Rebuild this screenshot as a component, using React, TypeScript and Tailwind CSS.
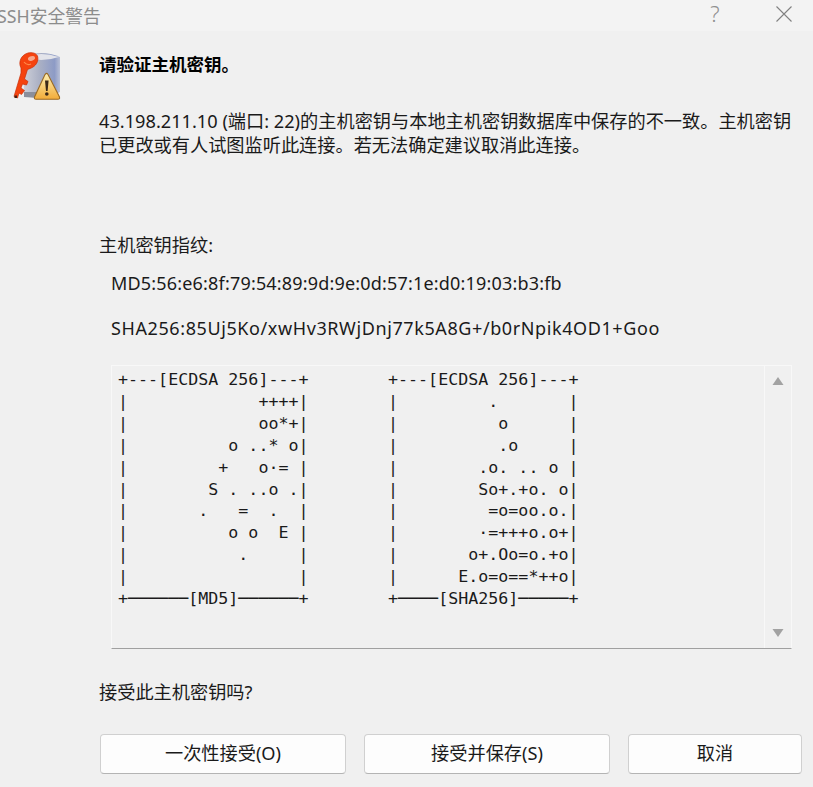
const FONT = '"Noto Sans", "Noto Sans CJK SC", sans-serif';

const left = [
  "+---[ECDSA 256]---+",
  "|             ++++|",
  "|             oo*+|",
  "|          o ..* o|",
  "|         +   o·= |",
  "|        S . ..o .|",
  "|       .   =  .  |",
  "|          o o  E |",
  "|           .     |",
  "|                 |",
  "+──────[MD5]──────+",
];
const right = [
  "+---[ECDSA 256]---+",
  "|         .       |",
  "|          o      |",
  "|          .o     |",
  "|        .o. .. o |",
  "|        So+.+o. o|",
  "|         =o=oo.o.|",
  "|        ·=+++o.o+|",
  "|       o+.Oo=o.+o|",
  "|      E.o=o==*++o|",
  "+────[SHA256]─────+",
];

function KeyIcon() {
  return (
    <svg width="48" height="48" viewBox="13 52 48 48" className="shrink-0">
      <defs>
        <linearGradient id="cyl" x1="0" x2="1" y1="0" y2="0">
          <stop offset="0" stopColor="#cfd1d9" />
          <stop offset="0.45" stopColor="#aab0c4" />
          <stop offset="0.85" stopColor="#8d9bc6" />
          <stop offset="1" stopColor="#b9c0d6" />
        </linearGradient>
        <linearGradient id="tri" x1="0" x2="0" y1="0" y2="1">
          <stop offset="0" stopColor="#fdf0b4" />
          <stop offset="1" stopColor="#f2ab38" />
        </linearGradient>
      </defs>
      <path d="M23 57 Q41 49 60 57 V92 Q50 98 38 98 L24 96 Z" fill="url(#cyl)" />
      <path d="M24 57 Q41 51 59 57 Q41 63 24 57 Z" fill="#e3e4ea" />
      <path d="M24 92 H38 V98 L24 97 Z" fill="#8b8f9c" />
      <path d="M37.5 56 C39 61 36 66.5 30 68.5 L27.5 69.5 L24.5 79 L28 81.5 L26.5 85 L22.5 84 L21 88 L24.5 90.5 L21.5 94.5 L19 93 L17.5 98 L14 96.5 L21 73 L21 68 C18 62 21 55 28 53 C32 52 36 53 37.5 56 Z" fill="#f5430f" stroke="#c92f08" strokeWidth="0.7" />
      <ellipse cx="31.5" cy="58.5" rx="3.6" ry="2.2" fill="#f6a78c" transform="rotate(-15 31.5 58.5)" />
      <path d="M24 62 Q27 66 31 64" fill="none" stroke="#ff8a4a" strokeWidth="1.2" />
      <rect x="14.5" y="95.5" width="2.5" height="2.5" fill="#4a2010" />
      <path d="M46 73.5 Q47 73 48 74.5 L59.5 97 Q60 99.3 58 99.3 L36 99.3 Q34 99.3 34.5 97 L45 74.5 Z" fill="url(#tri)" stroke="#9a6a24" strokeWidth="1.1" />
      <path d="M45 80.5 H48.6 L47.6 91 H46 Z" fill="#3a2818" />
      <circle cx="46.8" cy="94" r="1.8" fill="#3a2818" />
    </svg>
  );
}

function Ascii({ lines, className }: { lines: string[]; className: string }) {
  return (
    <div className={`text-[16.67px] leading-[21.9px] whitespace-pre text-[#1a1a1a] ${className}`} style={{ fontFamily: '"DejaVu Sans Mono", monospace' }}>
      {lines.map((l, i) => (
        <div key={i}>{l}</div>
      ))}
    </div>
  );
}

function Btn({ label, w }: { label: string; w: string }) {
  return (
    <div className={`${w} h-[40px] rounded-[4px] border border-[#d0d0d0] border-b-[#b4b4b4] bg-[#fdfdfd] flex items-center justify-center text-[18.2px] text-[#1a1a1a]`}>
      {label}
    </div>
  );
}

export default function App() {
  return (
    <div className="w-[813px] h-[787px] overflow-hidden bg-[#f0f0f0] text-[18.2px] text-[#1a1a1a]" style={{ fontFamily: FONT }}>
      <div className="h-[31px] bg-[#f3f3f3] flex items-center text-[#8c8c8c]">
        <span className="ml-[-3px] flex-1 text-[17.8px] leading-[28px]">SSH安全警告</span>
        <span className="self-start w-[30px] mr-[46px] text-center text-[#909090] text-[22px] font-light leading-[26px]">?</span>
        <svg width="16" height="16" viewBox="0 0 16 16" className="mr-[21px] mb-[4px]">
          <path d="M0.5 0.5 L15.5 15.5 M15.5 0.5 L0.5 15.5" stroke="#808080" strokeWidth="1.1" />
        </svg>
      </div>

      <div className="flex">
        <div className="w-[99px] shrink-0 pl-[13px] pt-[21px]">
          <KeyIcon />
        </div>
        <div className="flex-1 pr-[11px]">
          <div className="mt-[20px] h-[26px] leading-[26px] font-bold text-black text-[17.5px]">请验证主机密钥。</div>
          <div className="mt-[32px] leading-[24px] whitespace-nowrap">
            <div>43.198.211.10 (端口: 22)的主机密钥与本地主机密钥数据库中保存的不一致。主机密钥</div>
            <div>已更改或有人试图监听此连接。若无法确定建议取消此连接。</div>
          </div>
          <div className="mt-[76px] leading-[25px]">主机密钥指纹:</div>
          <div className="mt-[13px] ml-[12px] leading-[25px] text-[18px] tracking-[0.18px]">MD5:56:e6:8f:79:54:89:9d:9e:0d:57:1e:d0:19:03:b3:fb</div>
          <div className="mt-[20px] ml-[12px] leading-[25px] text-[18px] tracking-[0.6px]">SHA256:85Uj5Ko/xwHv3RWjDnj77k5A8G+/b0rNpik4OD1+Goo</div>

          <div className="mt-[24px] ml-[12px] h-[284px] w-[681px] flex border border-[#f8f8f8] border-b-[#a0a0a0] bg-[#f0f0f0]">
            <div className="flex-1 flex pl-[6px] pt-[3px]">
              <Ascii lines={left} className="w-[270px]" />
              <Ascii lines={right} className="" />
            </div>
            <div className="w-[27px] border-l border-[#f8f8f8] flex flex-col items-center justify-between pt-[10px] pb-[10px]">
              <svg width="12" height="10" viewBox="0 0 12 10"><path d="M6 1 L11.5 9 H0.5 Z" fill="#a2a2a2" /></svg>
              <svg width="12" height="10" viewBox="0 0 12 10"><path d="M0.5 1 H11.5 L6 9 Z" fill="#a2a2a2" /></svg>
            </div>
          </div>

          <div className="mt-[31px] leading-[25px]">接受此主机密钥吗?</div>

          <div className="mt-[29px] pl-[1px] flex gap-[18px] w-[720px]">
            <Btn label="一次性接受(O)" w="w-[246px]" />
            <Btn label="接受并保存(S)" w="w-[246px]" />
            <Btn label="取消" w="w-[174px]" />
          </div>
        </div>
      </div>
    </div>
  );
}
